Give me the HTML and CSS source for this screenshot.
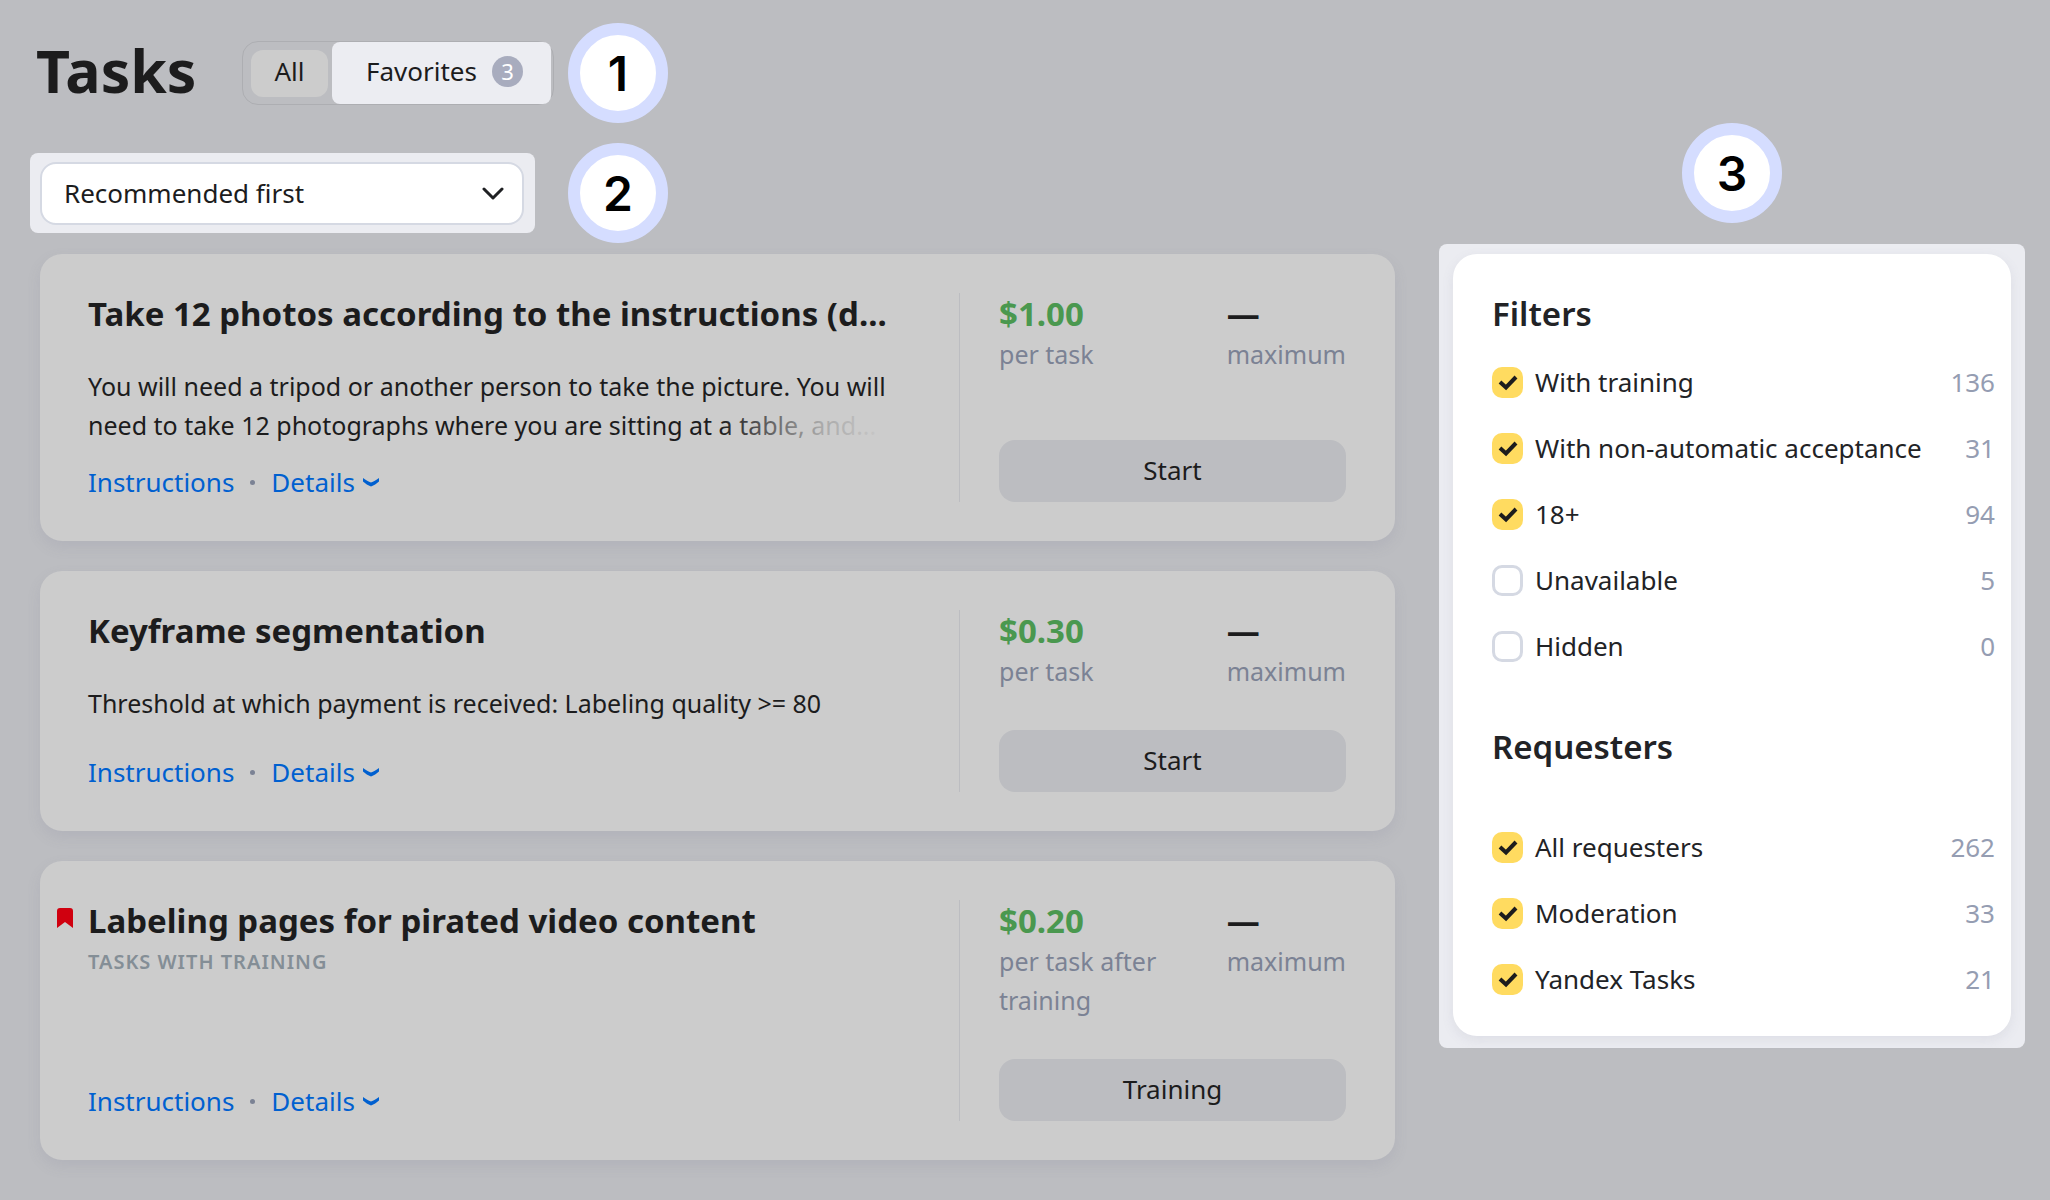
FILE: index.html
```html
<!DOCTYPE html>
<html lang="en">
<head>
    <meta charset="UTF-8">
    <meta name="viewport" content="width=device-width, initial-scale=1.0">
    <title>Tasks</title>
    <link rel="stylesheet" href="styles.css">
</head>
<body>

<div class="page">
    <main class="main">
        <header class="row">
            <div class="row-left heading">
                <h1>Tasks</h1>
                <div class="tabs">
                    <button type="button" class="tab tab-all">All</button>
                    <button type="button" class="tab tab-favorites">Favorites <span class="tab-count">3</span></button>
                </div>
            </div>
            <div class="step">1</div>
        </header>

        <div class="row row-sort">
            <div class="row-left">
                <div class="spot spot-sort">
                    <select class="sort" aria-label="Sort tasks">
                        <option>Recommended first</option>
                    </select>
                </div>
            </div>
            <div class="step">2</div>
        </div>

        <section class="cards">
            <article class="card">
                <div class="info">
                    <h2>Take 12 photos according to the instructions (d...</h2>
                    <p class="text text-fade">You will need a tripod or another person to take the picture. You will<br>need to take 12 photographs where you are sitting at a table, and...</p>
                    <div class="links">
                        <a href="#">Instructions</a>
                        <span class="dot"></span>
                        <a href="#" class="details">Details
                            <svg width="16" height="9" viewBox="0 0 16 9"><path d="M0 0C3 2.200 5.500 3.700 8 4.600C10.500 3.700 13 2.200 16 0V3.400C13.500 5.600 11 7.200 8 8.600C5 7.200 2.500 5.600 0 3.400Z"/></svg>
                        </a>
                    </div>
                </div>
                <div class="pay">
                    <div class="prices">
                        <div class="price"><strong class="sum">$1.00</strong><span>per task</span></div>
                        <div class="price"><strong>—</strong><span>maximum</span></div>
                    </div>
                    <button type="button" class="start">Start</button>
                </div>
            </article>

            <article class="card">
                <div class="info">
                    <h2>Keyframe segmentation</h2>
                    <p class="text">Threshold at which payment is received: Labeling quality &gt;= 80</p>
                    <div class="links">
                        <a href="#">Instructions</a>
                        <span class="dot"></span>
                        <a href="#" class="details">Details
                            <svg width="16" height="9" viewBox="0 0 16 9"><path d="M0 0C3 2.200 5.500 3.700 8 4.600C10.500 3.700 13 2.200 16 0V3.400C13.500 5.600 11 7.200 8 8.600C5 7.200 2.500 5.600 0 3.400Z"/></svg>
                        </a>
                    </div>
                </div>
                <div class="pay">
                    <div class="prices">
                        <div class="price"><strong class="sum">$0.30</strong><span>per task</span></div>
                        <div class="price"><strong>—</strong><span>maximum</span></div>
                    </div>
                    <button type="button" class="start">Start</button>
                </div>
            </article>

            <article class="card">
                <svg class="bookmark" width="16" height="20" viewBox="0 0 16 20"><path d="M3 0H13Q16 0 16 3V20L8 14L0 20V3Q0 0 3 0Z"/></svg>
                <div class="info">
                    <h2>Labeling pages for pirated video content</h2>
                    <p class="kind">TASKS WITH TRAINING</p>
                    <div class="links">
                        <a href="#">Instructions</a>
                        <span class="dot"></span>
                        <a href="#" class="details">Details
                            <svg width="16" height="9" viewBox="0 0 16 9"><path d="M0 0C3 2.200 5.500 3.700 8 4.600C10.500 3.700 13 2.200 16 0V3.400C13.500 5.600 11 7.200 8 8.600C5 7.200 2.500 5.600 0 3.400Z"/></svg>
                        </a>
                    </div>
                </div>
                <div class="pay">
                    <div class="prices">
                        <div class="price"><strong class="sum">$0.20</strong><span>per task after training</span></div>
                        <div class="price"><strong>—</strong><span>maximum</span></div>
                    </div>
                    <button type="button" class="start">Training</button>
                </div>
            </article>
        </section>
    </main>

    <aside class="side">
        <div class="step">3</div>
        <div class="spot spot-filters">
            <div class="filters">
                <h3>Filters</h3>
                <ul>
                    <li><label><input type="checkbox" checked>With training</label><span>136</span></li>
                    <li><label><input type="checkbox" checked>With non-automatic acceptance</label><span>31</span></li>
                    <li><label><input type="checkbox" checked>18+</label><span>94</span></li>
                    <li><label><input type="checkbox">Unavailable</label><span>5</span></li>
                    <li><label><input type="checkbox">Hidden</label><span>0</span></li>
                </ul>
                <h3 class="requesters">Requesters</h3>
                <ul>
                    <li><label><input type="checkbox" checked>All requesters</label><span>262</span></li>
                    <li><label><input type="checkbox" checked>Moderation</label><span>33</span></li>
                    <li><label><input type="checkbox" checked>Yandex Tasks</label><span>21</span></li>
                </ul>
            </div>
        </div>
    </aside>
</div>

</body>
</html>
```
FILE: styles.css
```css
* {
    box-sizing: border-box;
}

body {
    margin: 0;
    font-family: "Noto Sans", sans-serif;
    font-size: 26px;
    line-height: 39px;
    color: #1c1c1d;
    background-color: #bcbdc1;
}

h1, h2, h3, p, ul {
    margin: 0;
    padding: 0;
}

button, select {
    font: inherit;
    color: inherit;
    border: none;
}

.page {
    display: grid;
    grid-template-columns: minmax(0, 1fr) 586px;
    gap: 44px;
    align-items: start;
    padding: 23px 25px 40px 30px;
}

/* Top rows */

.row {
    display: flex;
    align-items: center;
}

.row-sort {
    margin-top: 20px;
}

.row-left {
    width: 538px;
}

.heading {
    display: flex;
    align-items: center;
    justify-content: space-between;
    padding: 0 14px 0 6px;
}

h1 {
    padding-bottom: 6px;
    font-size: 59px;
    line-height: 80px;
}

.step {
    width: 100px;
    height: 100px;
    border: 12px solid #d5ddff;
    border-radius: 50%;
    background-color: #fff;
    color: #000;
    font-family: Inter, sans-serif;
    font-size: 48px;
    font-weight: 600;
    line-height: 78px;
    text-align: center;
}

.tabs {
    display: flex;
    align-items: center;
    gap: 4px;
    width: 312px;
    height: 64px;
    padding: 0 2px 0 8px;
    border: 1px solid #adaeb2;
    border-radius: 16px;
}

.tab {
    display: flex;
    align-items: center;
    justify-content: center;
    padding: 0 0 3px;
}

.tab-all {
    width: 77px;
    height: 47px;
    border-radius: 12px;
    background-color: #ccc;
}

.tab-favorites {
    flex: 1;
    gap: 15px;
    height: 62px;
    padding-left: 6px;
    border-radius: 8px;
    background-color: #ecedf2;
}

.tab-count {
    width: 31px;
    height: 31px;
    border-radius: 50%;
    background-color: #a8acbe;
    color: #fff;
    font-size: 22px;
    line-height: 31px;
}

.spot {
    border-radius: 8px;
    background-color: #ebecf1;
}

.spot-sort {
    width: 505px;
    padding: 9px 11px 8px 10px;
}

.sort {
    display: block;
    width: 100%;
    height: 63px;
    padding: 0 22px;
    border: 2px solid #d5d9e3;
    border-radius: 16px;
    appearance: none;
    background: #fff url("data:image/svg+xml,%3Csvg xmlns='http://www.w3.org/2000/svg' width='24' height='14' fill='none' stroke='%231f2023' stroke-width='3' stroke-linecap='round' stroke-linejoin='round'%3E%3Cpath d='M3 2L12 11L21 2'/%3E%3C/svg%3E") no-repeat right 17px center;
}

/* Task cards */

.cards {
    display: grid;
    grid-template-columns: minmax(0, 1fr);
    gap: 30px;
    margin: 11px 0 0 10px;
}

.card {
    position: relative;
    display: flex;
    padding: 39px 49px 39px 48px;
    border-radius: 22px;
    background-color: #ccc;
    box-shadow: 0 6px 14px rgba(120, 120, 150, 0.14);
}

.info {
    display: flex;
    flex: 1;
    flex-direction: column;
    min-width: 0;
    padding-right: 70px;
}

h2 {
    font-size: 33px;
    line-height: 42px;
    white-space: nowrap;
}

.text {
    position: relative;
    margin-top: 32px;
    font-size: 25px;
    white-space: nowrap;
}

.text-fade::after {
    content: "";
    position: absolute;
    right: 0;
    bottom: 0;
    width: 170px;
    height: 39px;
    background: linear-gradient(90deg, rgba(204, 204, 204, 0), rgba(204, 204, 204, 0.8) 60%, #ccc);
}

.kind {
    color: #848e96;
    font-size: 20px;
    font-weight: 600;
    letter-spacing: 1px;
}

.bookmark {
    position: absolute;
    top: 47px;
    left: 17px;
    fill: #d0000f;
}

.links {
    display: flex;
    align-items: center;
    margin-top: auto;
    padding-top: 18px;
}

.links a {
    color: #0060d0;
    text-decoration: none;
}

.dot {
    width: 5px;
    height: 5px;
    margin: 0 16px;
    border-radius: 50%;
    background-color: #7b8294;
}

.details {
    display: flex;
    align-items: center;
    gap: 8px;
}

.details svg {
    fill: #0060d0;
}

.pay {
    display: flex;
    flex-direction: column;
    flex-shrink: 0;
    justify-content: space-between;
    gap: 39px;
    width: 387px;
    padding-left: 39px;
    border-left: 1px solid #bcbdc1;
}

.prices {
    display: flex;
    justify-content: space-between;
}

.price {
    max-width: 180px;
    color: #7b8294;
    font-size: 25px;
}

.price strong {
    display: block;
    color: #1c1c1d;
    font-size: 33px;
    line-height: 42px;
}

.price .sum {
    color: #4a984f;
}

.start {
    height: 62px;
    padding-bottom: 2px;
    border-radius: 16px;
    background-color: #bcbdc1;
}

/* Filters */

.side {
    display: flex;
    flex-direction: column;
    align-items: center;
    gap: 21px;
    padding-top: 100px;
}

.spot-filters {
    width: 100%;
    padding: 10px 14px 12px;
}

.filters {
    padding: 39px 16px 24px 39px;
    border-radius: 24px;
    background-color: #fff;
    box-shadow: 0 4px 12px rgba(120, 120, 150, 0.12);
    color: #222326;
}

h3 {
    font-size: 33px;
    font-weight: 600;
    line-height: 42px;
}

.filters ul {
    margin-top: 14px;
    list-style: none;
}

.filters li {
    display: flex;
    align-items: center;
    justify-content: space-between;
    height: 66px;
}

.filters label {
    display: flex;
    align-items: center;
    gap: 12px;
}

.filters li span {
    color: #959db2;
}

.filters .requesters {
    margin-top: 47px;
}

.filters .requesters + ul {
    margin-top: 46px;
}

.filters input {
    width: 31px;
    height: 31px;
    margin: 0;
    border: 3px solid #d5d9e3;
    border-radius: 10px;
    appearance: none;
    background-color: #fff;
}

.filters input:checked {
    border: none;
    background: #ffdb60 url("data:image/svg+xml,%3Csvg xmlns='http://www.w3.org/2000/svg' width='31' height='31' fill='none' stroke='%231c1c1d' stroke-width='4'%3E%3Cpath d='M8 15L14 20.500L24 10'/%3E%3C/svg%3E") no-repeat center;
}
```
